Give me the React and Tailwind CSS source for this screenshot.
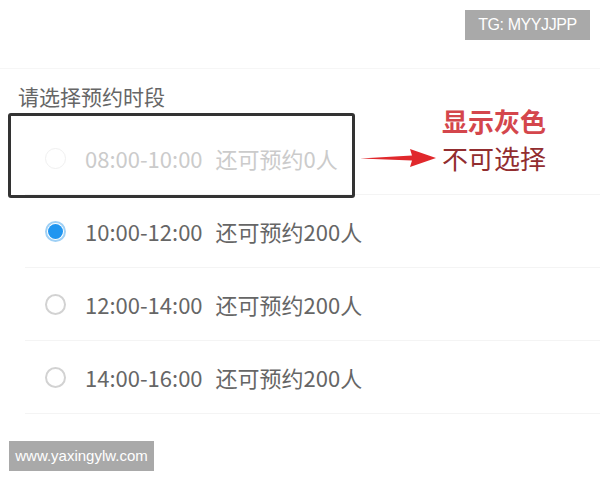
const slots = [
  { time: '08:00-10:00', left: '还可预约0人', disabled: true },
  { time: '10:00-12:00', left: '还可预约200人', checked: true },
  { time: '12:00-14:00', left: '还可预约200人' },
  { time: '14:00-16:00', left: '还可预约200人' },
];

function Radio({ checked, disabled }) {
  if (checked) {
    return (
      <span className="w-[21px] h-[21px] rounded-full border-2 border-[#9fd0f5] flex items-center justify-center shrink-0">
        <span className="w-[15px] h-[15px] rounded-full bg-[#2196f0]" />
      </span>
    );
  }
  return (
    <span
      className={
        disabled
          ? 'w-[21px] h-[21px] rounded-full border border-[#f0f0f0] shrink-0'
          : 'w-[21px] h-[21px] rounded-full border-2 border-[#d2d2d2] shrink-0'
      }
    />
  );
}

export default function App() {
  return (
    <div
      className="w-[600px] h-[480px] bg-white overflow-hidden flex flex-col"
      style={{ fontFamily: '"Noto Sans CJK SC", "Noto Sans", sans-serif' }}
    >
      {/* watermark top */}
      <div className="flex justify-end pt-[10px] pr-[10px]">
        <div className="h-[30px] w-[125px] bg-[#a9a9a9] text-white text-[16px] flex items-center justify-center tracking-tight" style={{ fontFamily: '"Liberation Sans", Arial, sans-serif' }}>
          TG: MYYJJPP
        </div>
      </div>

      <div className="mt-[28px] border-t border-[#f6f6f6] pl-[18px]">
        <div className="mt-[13px] text-[21px] leading-[28px] text-[#666]">请选择预约时段</div>

        <div className="relative mt-[12px]">
          <div className="flex flex-col pl-[7px]">
            {slots.map((s) => (
              <div
                key={s.time}
                className="h-[73px] flex items-center gap-[19px] pl-[20px] border-b border-[#f4f4f4]"
              >
                <Radio checked={s.checked} disabled={s.disabled} />
                <span
                  className={
                    s.disabled
                      ? 'text-[22px] text-[#cbcbcb] whitespace-nowrap flex gap-[13px]'
                      : 'text-[22px] text-[#666] whitespace-nowrap flex gap-[13px]'
                  }
                >
                  <span>{s.time}</span>
                  <span>{s.left}</span>
                </span>
              </div>
            ))}
          </div>

          {/* annotation box */}
          <div className="absolute left-[-10px] top-[-9px] w-[347px] h-[85px] border-[3px] border-[#333] rounded-[3px]" />

          {/* arrow */}
          <svg className="absolute left-[342px] top-[25px]" width="76" height="22" viewBox="0 0 76 22">
            <path d="M0 11.5 L52 8.5 L50 2 L76 11 L50 20 L52 13.5 Z" fill="#e0282c" />
          </svg>

          {/* red notes */}
          <div className="absolute left-[424px] top-[-20px] flex flex-col">
            <span className="text-[26px] leading-[37px] font-bold text-[#d4464c]">显示灰色</span>
            <span className="text-[26px] leading-[37px] text-[#922d2f]">不可选择</span>
          </div>
        </div>
      </div>

      {/* watermark bottom */}
      <div className="mt-[27px] pl-[9px]">
        <div className="h-[30px] w-[145px] bg-[#a9a9a9] text-white text-[15px] flex items-center justify-center" style={{ fontFamily: '"Liberation Sans", Arial, sans-serif' }}>
          www.yaxingylw.com
        </div>
      </div>
    </div>
  );
}
